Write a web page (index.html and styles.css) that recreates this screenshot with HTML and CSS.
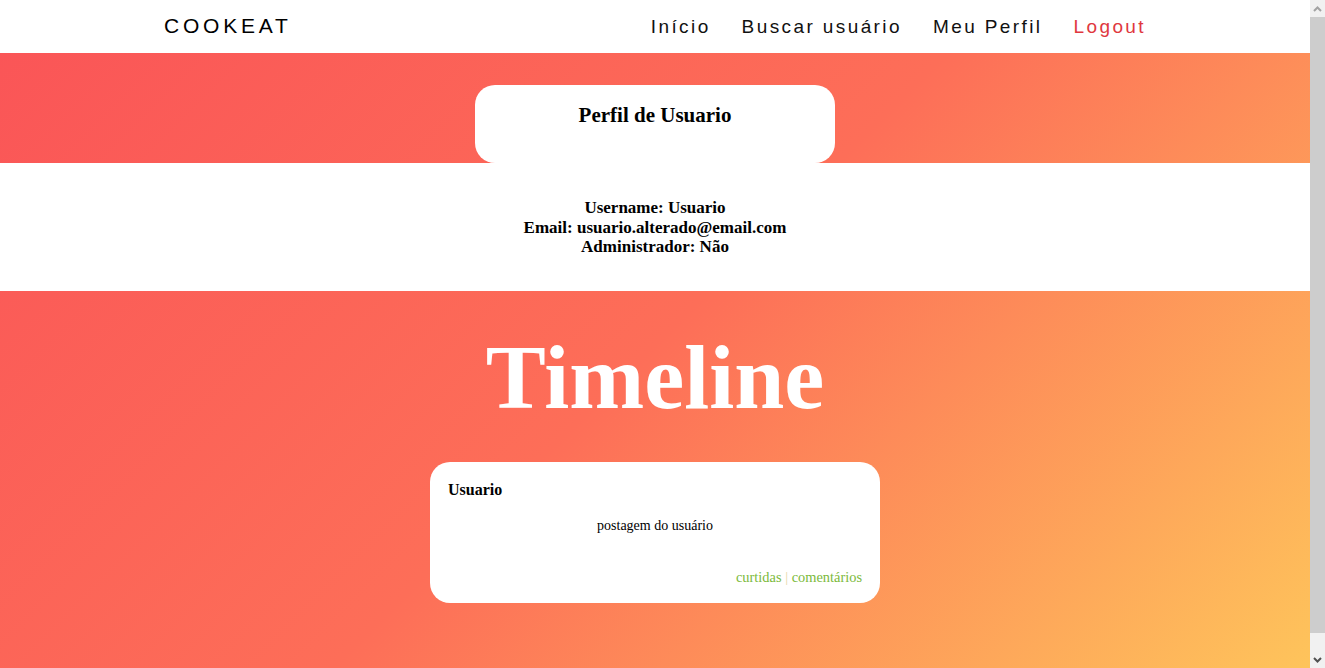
FILE: index.html
```html
<!DOCTYPE html>
<html lang="pt-BR">
<head>
<meta charset="utf-8">
<title>CookEat - Perfil</title>
<link rel="stylesheet" href="styles.css">
</head>
<body>
<div class="page">
  <nav class="navbar">
    <div class="nav-inner">
      <a class="brand" href="#">COOKEAT</a>
      <ul class="nav-links">
        <li><a href="#">Início</a></li>
        <li><a href="#">Buscar usuário</a></li>
        <li><a href="#">Meu Perfil</a></li>
        <li><a href="#" class="logout">Logout</a></li>
      </ul>
    </div>
  </nav>
  <section class="profile-band">
    <div class="profile-card">
      <h2 class="profile-title">Perfil de Usuario</h2>
    </div>
  </section>
  <section class="profile-info">
    <p>Username: Usuario</p>
    <p>Email: usuario.alterado@email.com</p>
    <p>Administrador: Não</p>
  </section>
  <section class="timeline">
    <h1 class="timeline-title">Timeline</h1>
    <article class="post">
      <h3 class="post-author">Usuario</h3>
      <p class="post-text">postagem do usuário</p>
      <div class="post-actions"><a href="#">curtidas</a> <span class="sep">|</span> <a href="#">comentários</a></div>
    </article>
  </section>
</div>
<div class="scrollbar" aria-hidden="true">
  <div class="sb-btn sb-up">
    <svg width="9" height="6" viewBox="0 0 9 6"><path d="M1 5 L4.5 1.5 L8 5" fill="none" stroke="#a3a3a3" stroke-width="2"/></svg>
  </div>
  <div class="sb-track"><div class="sb-thumb"></div></div>
  <div class="sb-btn sb-down">
    <svg width="9" height="6" viewBox="0 0 9 6"><path d="M1 1 L4.5 4.5 L8 1" fill="none" stroke="#505050" stroke-width="2"/></svg>
  </div>
</div>
</body>
</html>
```

FILE: styles.css
```css
html, body {
  margin: 0;
  padding: 0;
}
html {
  overflow: hidden;
}
body {
  font-family: "Liberation Serif", "Times New Roman", serif;
  color: #000;
  background: #fff;
}
.page {
  width: calc(100% - 15px);
  background: linear-gradient(135deg, #fa5457 0%, #fd6e58 50%, #fec65b 100%);
}
.navbar {
  height: 53px;
  background: #fff;
}
.nav-inner {
  width: 982px;
  margin: 0 auto;
  height: 100%;
  display: flex;
  align-items: center;
  justify-content: space-between;
}
.brand {
  font-family: "Liberation Sans", Arial, sans-serif;
  font-size: 21px;
  letter-spacing: 3.8px;
  color: #000;
  text-decoration: none;
  margin-top: -1px;
}
.nav-links {
  list-style: none;
  margin: 0;
  padding: 0;
  display: flex;
  gap: 31px;
}
.nav-links a {
  font-family: "Liberation Sans", Arial, sans-serif;
  font-size: 19px;
  letter-spacing: 2.4px;
  color: #111;
  text-decoration: none;
}
.nav-links a.logout {
  color: #e0383e;
}
.profile-band {
  height: 110px;
  display: flex;
  justify-content: center;
  align-items: flex-end;
}
.profile-card {
  width: 360px;
  height: 78px;
  background: #fff;
  border-radius: 20px;
  box-sizing: border-box;
  padding-top: 18px;
  text-align: center;
}
.profile-title {
  margin: 0;
  font-size: 21px;
  font-weight: bold;
}
.profile-info {
  height: 128px;
  background: #fff;
  box-sizing: border-box;
  padding-top: 35px;
  text-align: center;
  font-weight: bold;
  font-size: 17px;
}
.profile-info p {
  margin: 0;
  line-height: 19.5px;
}
.timeline {
  height: 398px;
  display: flex;
  flex-direction: column;
  align-items: center;
}
.timeline-title {
  margin: 32px 0 0;
  font-size: 90px;
  line-height: 110px;
  font-weight: bold;
  color: #fff;
}
.post {
  margin-top: 29px;
  width: 450px;
  height: 141px;
  box-sizing: border-box;
  background: #fff;
  border-radius: 20px;
  padding: 19px 18px 0;
  display: flex;
  flex-direction: column;
}
.post-author {
  margin: 0;
  font-size: 16px;
  font-weight: bold;
  line-height: 18px;
}
.post-text {
  margin: 19px 0 0;
  font-size: 14px;
  text-align: center;
}
.post-actions {
  margin-top: 35px;
  text-align: right;
  font-size: 14.4px;
}
.post-actions a {
  color: #7cba3b;
  text-decoration: none;
}
.post-actions .sep {
  color: #e6d6a8;
}
.scrollbar {
  position: fixed;
  top: 0;
  right: 0;
  width: 15px;
  height: 100vh;
  background: #f1f1f1;
  display: flex;
  flex-direction: column;
}
.sb-btn {
  height: 17px;
  display: flex;
  align-items: center;
  justify-content: center;
  flex: none;
}
.sb-track {
  flex: 1;
  padding-bottom: 18px;
}
.sb-thumb {
  height: 100%;
  background: #cdcdcd;
}
```
